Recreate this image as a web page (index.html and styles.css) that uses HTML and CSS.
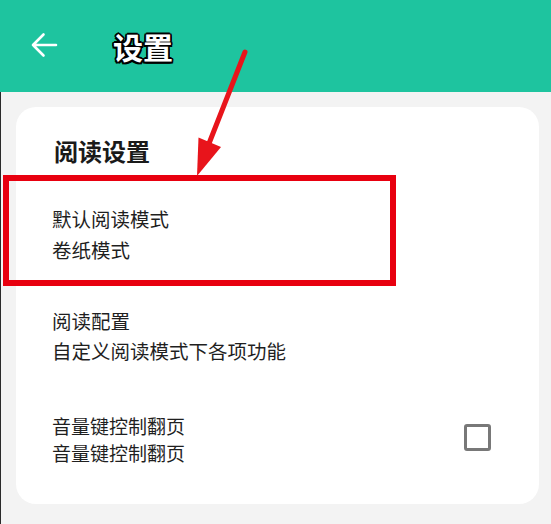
FILE: index.html
```html
<!DOCTYPE html>
<html lang="zh-CN">
<head>
<meta charset="utf-8">
<title>设置</title>
<link rel="stylesheet" href="styles.css">
</head>
<body>
<header class="topbar">
  <svg class="back" width="28" height="26" viewBox="0 0 28 26" aria-hidden="true">
    <path d="M3 13 H26 M3 13 L13.5 2.5 M3 13 L13.5 23.5" fill="none" stroke="#fff" stroke-width="2.6" stroke-linecap="round" stroke-linejoin="round"/>
  </svg>
  <h1 class="title">设置</h1>
</header>
<main class="page">
  <section class="card">
    <h2 class="section-title">阅读设置</h2>
    <div class="item item-mode">
      <div class="item-text">
        <div>默认阅读模式</div>
        <div>卷纸模式</div>
      </div>
    </div>
    <div class="item item-config">
      <div class="item-text">
        <div>阅读配置</div>
        <div>自定义阅读模式下各项功能</div>
      </div>
    </div>
    <div class="item item-volume">
      <div class="item-text">
        <div>音量键控制翻页</div>
        <div>音量键控制翻页</div>
      </div>
      <span class="checkbox"></span>
    </div>
  </section>
</main>
<div class="highlight-box"></div>
<svg class="pointer" width="551" height="524" viewBox="0 0 551 524" aria-hidden="true">
  <line x1="245" y1="52" x2="208" y2="146" stroke="#e8141b" stroke-width="5" stroke-linecap="round"/>
  <polygon points="197,176 198.5,137.5 221,147" fill="#e8141b"/>
</svg>
</body>
</html>
```

FILE: styles.css
```css
html, body {
  margin: 0;
  padding: 0;
}
body {
  width: 551px;
  height: 524px;
  overflow: hidden;
  background: #f3f3f3;
  font-family: "Noto Sans CJK SC", "Noto Sans", sans-serif;
  color: #1f1f1f;
  position: relative;
}
.topbar {
  height: 92px;
  background: #1ec49f;
  display: flex;
  align-items: center;
  padding-left: 30px;
  box-sizing: border-box;
}
.back {
  display: block;
  margin-top: -2px;
}
.title {
  margin: 0 0 0 55px;
  font-size: 30px;
  font-weight: 700;
  line-height: 40px;
  color: #fff;
  text-shadow:
    -1.5px -1.5px 0 #000, 1.5px -1.5px 0 #000,
    -1.5px 1.5px 0 #000, 1.5px 1.5px 0 #000,
    0 -1.8px 0 #000, 0 1.8px 0 #000,
    -1.8px 0 0 #000, 1.8px 0 0 #000;
}
.page {
  padding: 15px 12px 0 15px;
  border-left: 1px solid #2a2a2a;
  height: 432px;
  box-sizing: border-box;
}
.card {
  background: #fff;
  border-radius: 20px;
  padding: 27px 48px 38px 36px;
}
.section-title {
  margin: 0;
  padding-left: 2px;
  font-size: 24px;
  font-weight: 700;
  line-height: 34px;
  color: #1a1a1a;
}
.item {
  display: flex;
  align-items: center;
  justify-content: space-between;
}
.item-text {
  font-size: 19.5px;
  font-weight: 400;
}
.item-mode {
  margin-top: 35px;
  line-height: 31px;
}
.item-config {
  margin-top: 41px;
  line-height: 30px;
}
.item-volume {
  margin-top: 46px;
  line-height: 27px;
}
.item-volume .item-text {
  font-size: 19px;
}
.checkbox {
  width: 27px;
  height: 27px;
  box-sizing: border-box;
  border: 3px solid #787878;
  border-radius: 3px;
  margin-top: -4px;
}
.highlight-box {
  position: absolute;
  left: 3px;
  top: 175px;
  width: 393px;
  height: 111px;
  box-sizing: border-box;
  border: 6px solid #e8000f;
}
.pointer {
  position: absolute;
  left: 0;
  top: 0;
  pointer-events: none;
}
```
